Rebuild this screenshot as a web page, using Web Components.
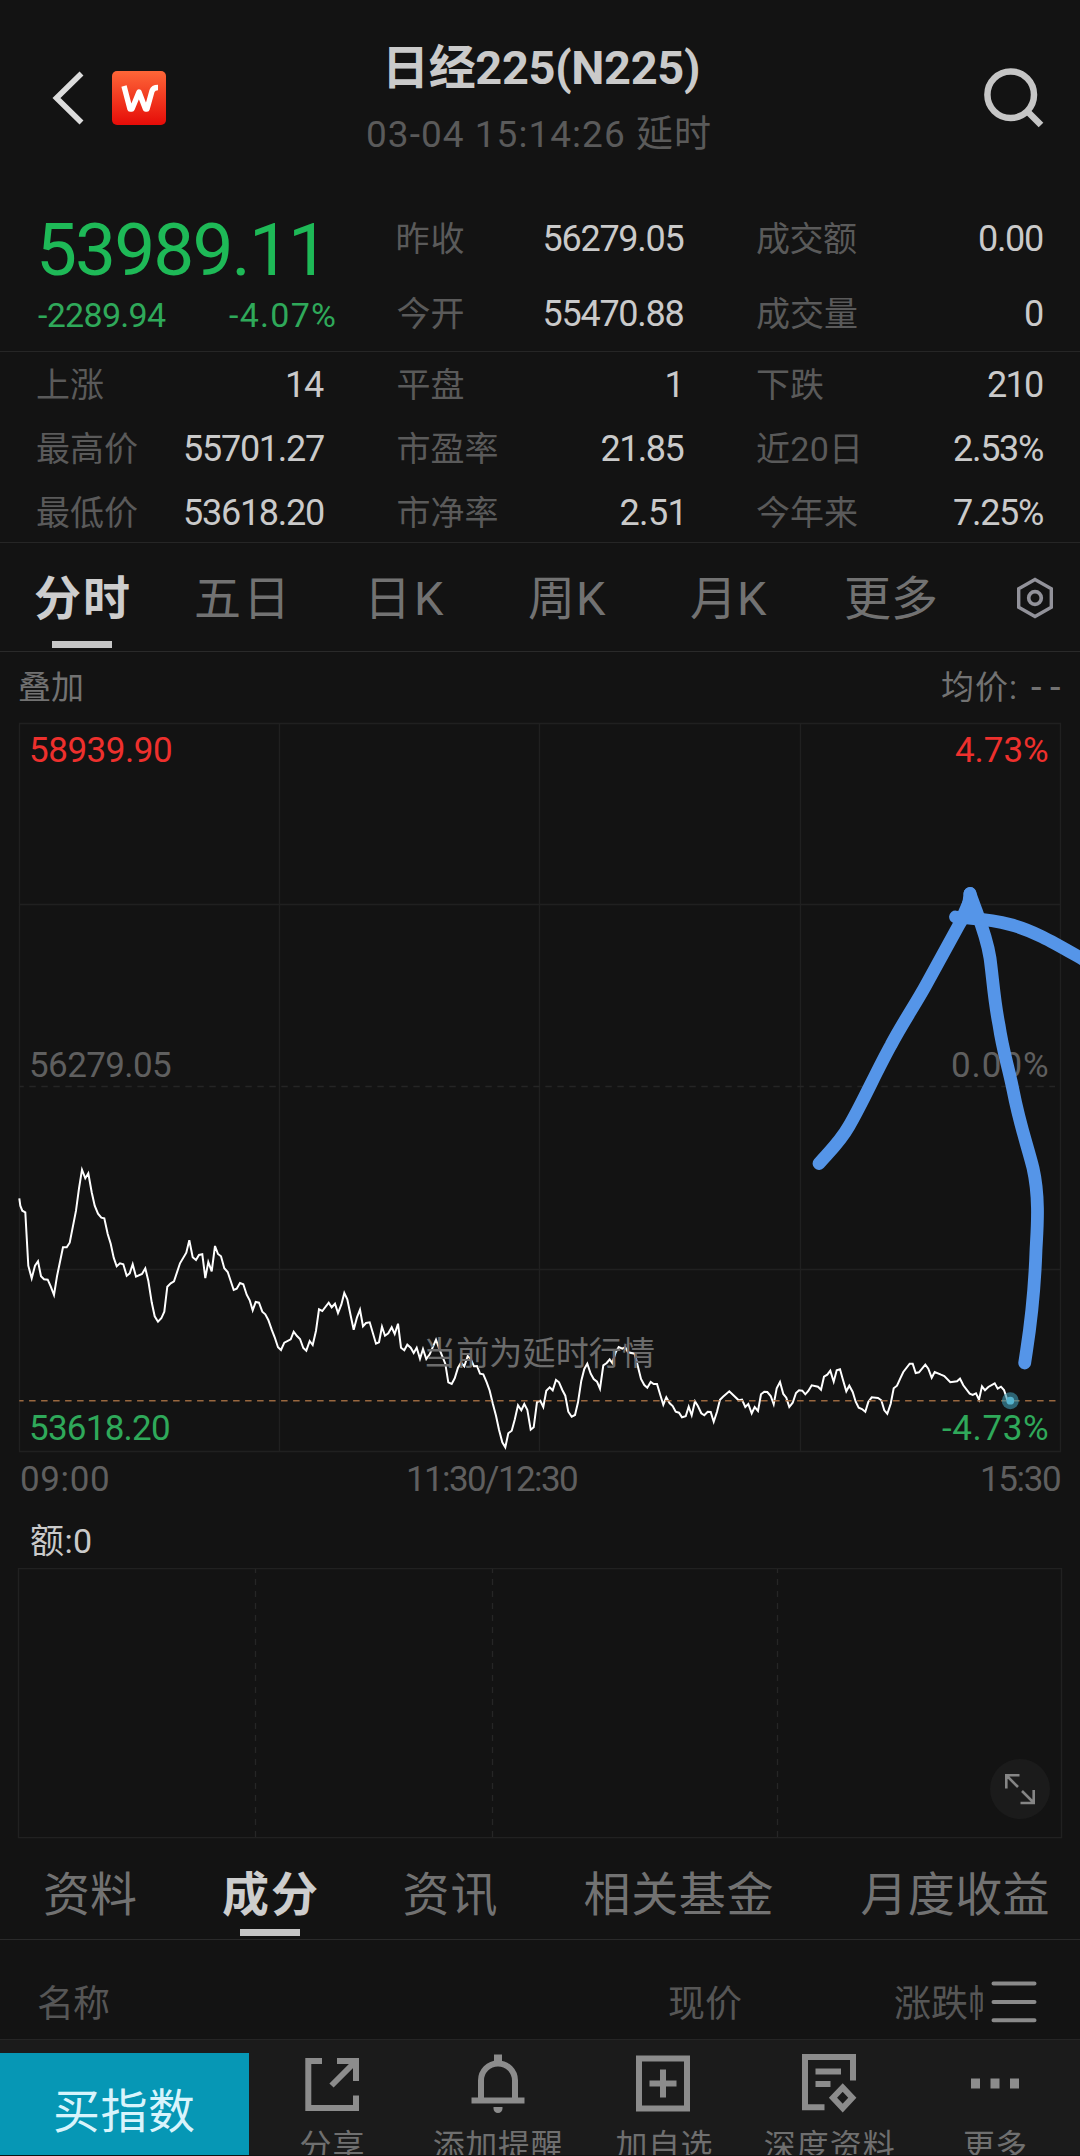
<!DOCTYPE html>
<html lang="zh-CN">
<head>
<meta charset="utf-8">
<title>日经225(N225)</title>
<style>
  body {
    margin: 0;
    width: 1080px;
    height: 2156px;
    overflow: hidden;
    background: #131313;
    color: #cacaca;
    font-family: Roboto, "Noto Sans CJK SC", sans-serif;
    font-kerning: none;
  }
</style>
</head>
<body>
<quote-page></quote-page>

<script>
const define = (name, html, init) => {
  const template = document.createElement('template');
  template.innerHTML = html;
  customElements.define(name, class extends HTMLElement {
    constructor() {
      super();
      this._shadowRoot = this.attachShadow({ mode: 'open' });
      this._shadowRoot.appendChild(template.content.cloneNode(true));
    }

    connectedCallback() {
      if (init) init.call(this, this._shadowRoot);
    }
  });
};

// One line of text, letter-spaced so that its glyphs span exactly `w` pixels.
const measure = document.createElement('canvas').getContext('2d');

class FitText extends HTMLElement {
  constructor() {
    super();
    this._shadowRoot = this.attachShadow({ mode: 'open' });
  }

  connectedCallback() {
    const text = this.getAttribute('text');
    const size = this.getAttribute('size') || 35;
    const weight = this.getAttribute('weight') || 400;
    const w = Number(this.getAttribute('w'));
    measure.font = `${weight} ${size}px Roboto, "Noto Sans CJK SC", sans-serif`;
    measure.fontKerning = 'none';
    const m = measure.measureText(text);
    const ink = m.actualBoundingBoxLeft + m.actualBoundingBoxRight;
    const spacing = text.length > 1 ? (w - ink) / (text.length - 1) : 0;
    this._shadowRoot.innerHTML = `
      <style>
        :host {
          display: block;
          flex: none;
          width: ${w}px;
          white-space: nowrap;
          font-size: ${size}px;
          font-weight: ${weight};
          transform: translateY(1px);
        }
        span {
          display: inline-block;
          margin-left: ${m.actualBoundingBoxLeft}px;
          letter-spacing: ${spacing}px;
        }
      </style>
      <span></span>`;
    this._shadowRoot.querySelector('span').textContent = text;
  }
}
customElements.define('fit-text', FitText);

define('quote-header', `
<style>
  :host {
    display: grid;
    grid-template-columns: 368px 342px 1fr;
    height: 200px;
  }
  .left { display: flex; align-items: center; padding: 0 0 4px 52px; }
  .left svg + svg { margin-left: 28px; }
  .title { line-height: 67px; padding-top: 33px; }
  .title fit-text:first-child { margin-left: 21px; }
  .sub { color: #5a5a5a; }
  .right { display: flex; align-items: center; justify-content: flex-end; padding: 0 36px 7px 0; }
</style>
<div class="left">
  <svg width="32" height="56" viewBox="0 0 32 56" fill="none" stroke="#dcdcdc" stroke-width="5.6">
    <path d="M29.5 3.5 4.5 28l25 24.5"/>
  </svg>
  <svg width="54" height="54" viewBox="0 0 54 54">
    <defs><linearGradient id="g" x2="0" y2="1">
      <stop stop-color="#fd6638"/><stop offset="1" stop-color="#e60c08"/>
    </linearGradient></defs>
    <rect width="54" height="54" rx="5" fill="url(#g)"/>
    <path d="M12 15 18 38h2L27 21l6.500 17H35L40 20q1.200-3.500 6-3.500" fill="none" stroke="#fff" stroke-width="5.400" stroke-linejoin="round"/>
  </svg>
</div>
<div class="title">
  <fit-text text="日经225(N225)" w="309" size="47" weight="700"></fit-text>
  <fit-text class="sub" text="03-04 15:14:26 延时" w="342" size="37"></fit-text>
</div>
<div class="right">
  <svg width="60" height="62" viewBox="0 0 60 62" fill="none" stroke="#c6c6c6" stroke-width="6.500">
    <circle cx="26.700" cy="28.700" r="23.300"/><path d="M43 45 57 59"/>
  </svg>
</div>
`);

define('stat-item', `
<style>
  :host { display: flex; justify-content: space-between; }
  .label { color: #5a5a5a; }
</style>
`, function render(root) {
  const [label, lw, value, vw, pad = 0] = this.getAttribute('data').split('|');
  root.innerHTML += `
    <fit-text class="label" text="${label}" w="${lw}" size="34"></fit-text>
    <fit-text text="${value}" w="${vw}" size="36" style="margin-right: ${pad}px"></fit-text>`;
});

define('quote-stats', `
<style>
  :host { display: block; }
  section {
    display: grid;
    grid-template-columns: 287px 286px 286px;
    column-gap: 73.500px;
    padding-left: 37px;
  }
  .top { height: 151px; grid-template-rows: 75px 75px; line-height: 76px; }
  .all { height: 190px; grid-auto-rows: 64px; line-height: 64px; border: solid #262626; border-width: 1.500px 0; }
  .price { grid-row: span 2; color: #1eb957; padding-top: 12px; }
  .price > fit-text { margin-left: 4px; line-height: 75px; }
  .change { display: flex; gap: 63px; padding-left: 1px; line-height: 54px; color: #2fa95a; }
</style>
<section class="top">
  <div class="price">
    <fit-text text="53989.11" w="273" size="73"></fit-text>
    <div class="change">
      <fit-text text="-2289.94" w="128" size="34"></fit-text>
      <fit-text text="-4.07%" w="106" size="34"></fit-text>
    </div>
  </div>
  <stat-item data="昨收|66|56279.05|139"></stat-item>
  <stat-item data="成交额|100|0.00|63"></stat-item>
  <stat-item data="今开|66|55470.88|139"></stat-item>
  <stat-item data="成交量|100|0|17"></stat-item>
</section>
<section class="all">
  <stat-item data="上涨|66|14|36"></stat-item>
  <stat-item data="平盘|66|1|12|4"></stat-item>
  <stat-item data="下跌|66|210|55"></stat-item>
  <stat-item data="最高价|100|55701.27|139"></stat-item>
  <stat-item data="市盈率|100|21.85|82"></stat-item>
  <stat-item data="近20日|101|2.53%|89"></stat-item>
  <stat-item data="最低价|100|53618.20|139"></stat-item>
  <stat-item data="市净率|100|2.51|60|3"></stat-item>
  <stat-item data="今年来|100|7.25%|89"></stat-item>
</section>
`);

define('tab-item', `
<style>
  :host { display: block; position: relative; color: #727272; }
  :host([active]) { color: #cdcdcd; }
  :host([active])::after {
    content: "";
    position: absolute;
    left: 16.500px;
    bottom: 4px;
    width: 60px;
    height: 7px;
    background: #c6c6c6;
  }
</style>
`, function render(root) {
  const weight = this.hasAttribute('active') ? 700 : 400;
  root.innerHTML += `<fit-text text="${this.getAttribute('text')}" w="${this.getAttribute('w')}" size="47" weight="${weight}"></fit-text>`;
});

define('tab-bar', `
<style>
  :host { display: grid; border-bottom: 1.500px solid #2a2a2a; }
</style>
<slot></slot>
`);

// Price line: runs of "x,y" in thirds of a pixel, each with its own origin.
const runs = [
  [0, 1140, '58,178 61,200 67,215 76,220 85,380 95,418 105,380 114,367 123,412 132,421 143,422 152,442 162,468 171,412 189,325 200,325 209,311 228,215 237,148 246,92 256,118 265,103 275,160 284,200 294,224 304,236 313,238 323,285 332,314 341,356 350,382 360,373 370,376 380,410 389,403 398,376 408,413 426,405 436,388 445,425 455,490 464,532 474,548 484,538 493,518 502,443 512,433 522,427 540,373 559,341 568,304 578,355 588,363 597,348 607,346 616,417 625,369 635,397 645,321 654,345 663,352 673,388 683,399 701,453 710,449 720,432 730,436 740,467 749,484 758,514 767,489 777,491 787,518 796,526 805,543 815,572 824,595 834,625 843,633 853,611 872,601 881,578 891,591 900,600 910,627 919,635 929,606 938,618 948,575 957,511 967,516 986,491 995,505 1005,494 1014,522 1024,497 1033,462 1042,481 1052,530 1061,572 1071,535'],
  [360, 1220, '0,272 9,322 18,312 29,310 48,374 57,370 66,323 75,350 85,343 95,325 104,345 114,314 123,386 133,394 142,377 152,386 161,402 170,386 180,419 189,390 199,420 209,406 228,362 238,390 256,434 265,490 275,495 284,478 294,446 303,431 313,442 323,411 332,420 342,442 351,441 360,464 370,466 380,490 389,515 398,553 408,590 417,632 427,670 436,685 445,643 455,635 464,602 474,559 484,574 493,555 502,572 512,632 521,625 531,549 541,545 550,564 559,515 569,505 578,514 588,483 597,490 607,513 616,530 625,578 635,593 645,588 654,550 664,485 673,450 682,434 692,464 701,480 711,488 720,509 730,439 740,432 749,421 757,432 767,400 776,384 787,389 796,385 804,400 824,404 833,440 843,480 853,498 862,506 872,489 881,495 891,495 901,528 910,557 919,535 929,553 938,561 947,578 957,581 966,595 977,592 986,563 995,589 1005,547 1014,562 1024,583 1033,589 1043,578 1052,579 1061,608 1071,578'],
  [720, 1220, '0,542 9,533 28,517 56,544 66,542 76,564 85,555 95,583 104,564 114,576 123,526 133,518 142,519 152,531 161,556 170,508 180,489 190,525 199,536 208,564 218,551 228,522 237,514 247,515 256,526 265,516 275,499 294,503 303,512 312,473 322,467 331,455 341,488 350,454 360,451 369,483 379,517 388,500 398,519 407,548 416,566 426,570 436,578 445,549 455,535 474,537 484,544 493,574 502,584 512,554 521,508 531,500 541,478 550,459 569,434 578,434 587,462 597,460 616,437 625,449 635,476 644,459 663,467 673,471 691,490 711,487 720,479 730,499 749,524 758,528 768,523 777,542 786,502 795,514 805,504 824,493 833,509 843,503 852,513 862,542 871,545'],
];

define('minute-chart', `
<style>
  :host { display: block; }
  .info { display: flex; height: 69px; line-height: 69px; padding: 0 20px 0 19px; color: #727272; }
  .info :nth-child(2) { margin: 0 16px 0 auto; }
  .plot { display: grid; height: 732px; }
  .plot > * { grid-area: 1 / 1; }
  .labels { display: grid; grid-template-columns: auto auto; justify-content: space-between; padding: 0 32px 0 31px; grid-template-rows: 58px 257px 59px 304px 54px; line-height: 58px; color: #5f5f5f; }
  .up { color: #ee302d; }
  .down { color: #2fa95a; }
  .r { justify-self: end; }
  .hint { align-self: start; justify-self: center; margin-top: 603px; line-height: 58px; color: #6c6c6c; }
  .axis { display: flex; height: 51px; line-height: 51px; padding: 0 20px 0 21px; color: #5f5f5f; }
  .axis :nth-child(2) { margin: 0 auto 0 300px; }
</style>
<div class="info">
  <fit-text text="叠加" w="63" size="33"></fit-text>
  <fit-text text="均价:" w="73" size="33"></fit-text>
  <fit-text text="--" w="29" size="38"></fit-text>
</div>
<div class="plot">
  <svg width="1080" height="732" viewBox="0 722 1080 732" fill="none">
    <path d="M19.500 724.500h1041V1452.500h-1041zM279.500 724v728M539.500 724v728M800.500 724v728M19 905.500h1041M19 1270.500h1041" stroke="#202020" stroke-width="1.300"/>
    <path d="M19.500 1087.500H1055" stroke="#252525" stroke-width="1.300" stroke-dasharray="6.500 5.500" stroke-dashoffset="2.200"/>
    <path class="line" stroke="#fff" stroke-width="2"/>
    <path d="M19.300 1401.700H1055.500" stroke="#a87145" stroke-opacity=".9" stroke-width="1.500" stroke-dasharray="6.500 5.500" stroke-dashoffset="2.200"/>
    <circle cx="1010.300" cy="1401.700" r="8.500" fill="#3f9bb4" fill-opacity=".6"/>
    <circle cx="1010.300" cy="1401.700" r="3.900" fill="#56b3cd"/>
  </svg>
  <div class="labels">
    <fit-text class="up" text="58939.90" w="140"></fit-text><fit-text class="up r" text="4.73%" w="93"></fit-text>
    <i></i><i></i>
    <fit-text text="56279.05" w="140"></fit-text><fit-text class="r" text="0.00%" w="96"></fit-text>
    <i></i><i></i>
    <fit-text class="down" text="53618.20" w="138"></fit-text><fit-text class="down r" text="-4.73%" w="106"></fit-text>
  </div>
  <fit-text class="hint" text="当前为延时行情" w="228" size="33"></fit-text>
</div>
<div class="axis">
  <fit-text text="09:00" w="87"></fit-text>
  <fit-text text="11:30/12:30" w="169"></fit-text>
  <fit-text text="15:30" w="78"></fit-text>
</div>
`, function render(root) {
  const points = [];
  runs.forEach(([x0, y0, run]) => {
    run.split(' ').forEach((pair) => {
      const [x, y] = pair.split(',');
      points.push(`${(x0 + x / 3).toFixed(1)} ${(y0 + y / 3).toFixed(1)}`);
    });
  });
  root.querySelector('.line').setAttribute('d', `M${points.join('L')}`);
});

define('volume-chart', `
<style>
  :host { display: block; position: relative; }
  .head { height: 55px; line-height: 55px; padding: 9px 0 0 31px; }
  svg { display: block; }
  button { position: absolute; right: 30px; bottom: 20px; width: 60px; height: 60px; border: 0; padding: 0; border-radius: 50%; background: #1b1b1b; }
</style>
<div class="head"><fit-text text="额:0" w="60" size="34"></fit-text></div>
<svg width="1080" height="271" viewBox="0 0 1080 271" fill="none" stroke="#212121" stroke-width="1.300">
  <path d="M18.500.700h1043v269h-1043z"/>
  <path d="M255.500 1v269M492.500 1v269M777.500 1v269" stroke="#262626" stroke-dasharray="6 6" stroke-dashoffset="2"/>
</svg>
<button>
  <svg width="60" height="60" viewBox="0 0 60 60" fill="none" stroke="#858585" stroke-width="2.600">
    <path d="M16.300 29.500V16.300h13.200M16.500 16.500l11.500 11.500M43.700 31v13H30.500M43.500 43.500 32 32"/>
  </svg>
</button>
`);

define('list-head', `
<style>
  :host { display: flex; height: 72px; line-height: 74px; padding: 27px 0 0 38px; color: #565656; }
  .price { margin-left: 560px; }
  .pct { width: 88px; margin-left: 154px; overflow: hidden; }
  svg { margin: 13px 0 0 8px; }
</style>
<fit-text text="名称" w="71" size="37"></fit-text>
<fit-text class="price" text="现价" w="72" size="37"></fit-text>
<div class="pct"><fit-text text="涨跌幅" w="109" size="37"></fit-text></div>
<svg width="46" height="44" viewBox="0 0 46 44" stroke="#8a8a8a" stroke-width="4" stroke-linecap="round">
  <path d="M2.500 3.500h41M2.500 22h41M2.500 40.200h41"/>
</svg>
`);

define('tool-item', `
<style>
  :host { display: flex; flex-direction: column; align-items: center; color: #6f6f6f; padding-top: 14px; }
  .label { margin-top: 12px; line-height: 38px; }
</style>
<slot></slot>
`, function render(root) {
  root.innerHTML += `<fit-text class="label" text="${this.getAttribute('text')}" w="${this.getAttribute('w')}" size="32"></fit-text>`;
});

define('tool-bar', `
<style>
  :host {
    display: grid;
    grid-template-columns: 249px repeat(5, 165.800px);
    height: 115px;
    overflow: hidden;
    background: #1b1b1b;
    border-top: 1.500px solid #252525;
  }
  .buy { margin-top: 13px; padding-left: 55px; line-height: 115px; background: #0697b5; color: #d8f4fc; }
  svg { display: block; }
</style>
<div class="buy"><fit-text text="买指数" w="139" size="47"></fit-text></div>
<tool-item text="分享" w="63">
  <svg width="60" height="60" viewBox="0 0 60 60" fill="none" stroke="#8c8c8c" stroke-width="6">
    <path d="M20 7H6.300v47H54V41.500M35 7h19v20M53 8 29.500 31.500"/>
  </svg>
</tool-item>
<tool-item text="添加提醒" w="128">
  <svg width="60" height="60" viewBox="0 0 60 60" fill="none" stroke="#8c8c8c" stroke-width="6">
    <path d="M13 46V26.500a17 17 0 0 1 34 0V46M3.500 46.500h53"/>
    <path d="M26 .500h8v7h-8zM25.500 53h9v1.500a4.500 4.500 0 0 1-9 0z" fill="#8c8c8c" stroke="none"/>
  </svg>
</tool-item>
<tool-item text="加自选" w="96">
  <svg width="60" height="60" viewBox="0 0 60 60" fill="none" stroke="#8c8c8c" stroke-width="6">
    <path d="M6 4.500h48v50H6zM30 15.500v28M16.500 29.500h27"/>
  </svg>
</tool-item>
<tool-item text="深度资料" w="129">
  <svg width="60" height="60" viewBox="0 0 60 60" fill="none" stroke="#8c8c8c" stroke-width="6">
    <path d="M25.500 53.300H6V3h48v23.500M16.500 17.500H42M16.500 30H31.500"/>
    <path d="M43.700 33.500 53.300 43.700 43.700 54 34 43.700z"/>
  </svg>
</tool-item>
<tool-item text="更多" w="62">
  <svg width="60" height="60" viewBox="0 0 60 60" fill="#8c8c8c">
    <path d="M6 24.500h9v10H6zM25.500 24.500h9v10h-9zM45 24.500h9v10h-9z"/>
  </svg>
</tool-item>
`);

// Freehand marker strokes over the chart.
define('pen-marks', `
<style>
  :host { position: absolute; left: 0; top: 880px; pointer-events: none; }
  svg { display: block; }
</style>
<svg width="1080" height="500" viewBox="0 880 1080 500" fill="none" stroke="#5595e8" stroke-width="12.800" stroke-linecap="round" stroke-linejoin="round">
  <path d="M819 1163.500C829 1152 840 1142 849 1126C862 1104 876 1072 891 1045C902 1024 915 1005 926 985L960 923Q969 910 970 893.500"/>
  <path d="M970 893.500C976 912 986 932 990 958C993 980 994 1000 999 1025C1003 1052 1008 1065 1013 1090C1020 1126 1027 1144 1033 1168C1040 1199 1037 1230 1036 1250C1034 1310 1028 1340 1024.700 1363"/>
  <path d="M955.500 917C975 919 990 919 1010 924.500C1035 931 1056 944 1086 961"/>
  <path d="M970 900 977 916H963z" fill="#5595e8"/>
</svg>
`);

define('quote-page', `
<style>
  :host { display: block; position: relative; }
  .period { grid-template-columns: 161px 176px 157px 162px 155px 170px 64px; height: 108px; line-height: 109px; padding-left: 35px; }
  .period svg { align-self: center; }
  .section { grid-template-columns: 178px 181.500px 180px 277px 200px; height: 91px; line-height: 92px; padding: 9px 0 0 45px; }
</style>
<quote-header></quote-header>
<quote-stats></quote-stats>
<tab-bar class="period">
  <tab-item text="分时" w="94" active></tab-item>
  <tab-item text="五日" w="87"></tab-item>
  <tab-item text="日K" w="72"></tab-item>
  <tab-item text="周K" w="77"></tab-item>
  <tab-item text="月K" w="76"></tab-item>
  <tab-item text="更多" w="90"></tab-item>
  <svg width="38" height="44" viewBox="0 0 38 44" fill="none" stroke="#92929a" stroke-width="3.400">
    <path d="M19 3.500 35.300 12.700V31.300L19 40.500 2.700 31.300V12.700z"/><circle cx="19" cy="22" r="6.300" stroke-width="3.700"/>
  </svg>
</tab-bar>
<minute-chart></minute-chart>
<volume-chart></volume-chart>
<tab-bar class="section">
  <tab-item text="资料" w="91"></tab-item>
  <tab-item text="成分" w="94" active></tab-item>
  <tab-item text="资讯" w="92"></tab-item>
  <tab-item text="相关基金" w="188"></tab-item>
  <tab-item text="月度收益" w="186"></tab-item>
</tab-bar>
<list-head></list-head>
<tool-bar></tool-bar>
<pen-marks></pen-marks>
`);
</script>
</body>
</html>
